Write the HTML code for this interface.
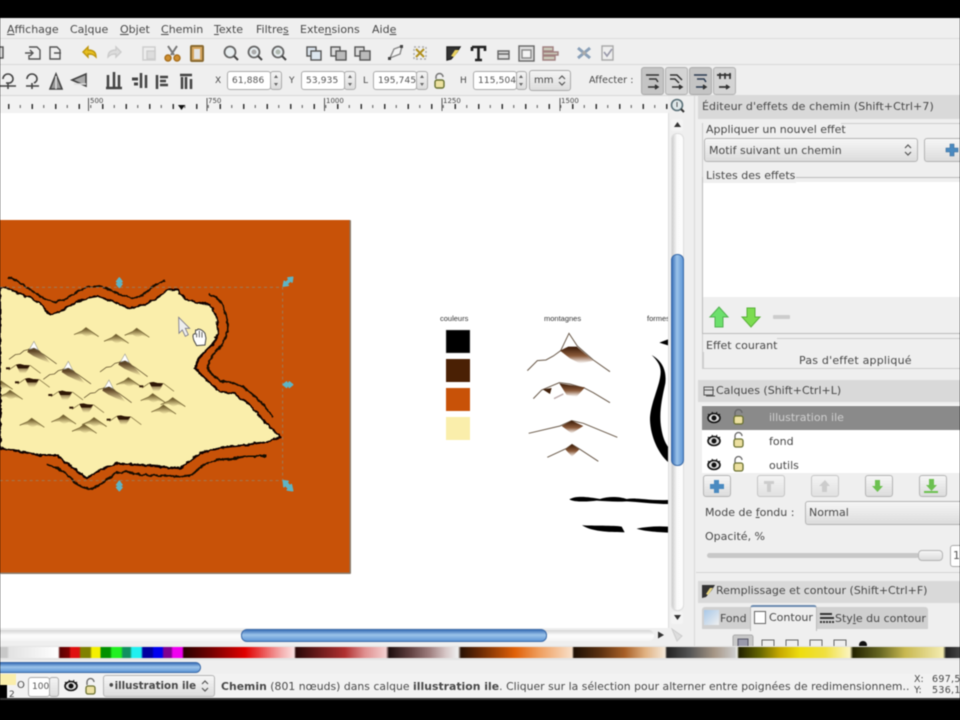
<!DOCTYPE html>
<html lang="fr"><head><meta charset="utf-8"><title>Inkscape</title>
<style>
html,body{margin:0;padding:0;background:#000;}
#r{position:relative;width:960px;height:720px;overflow:hidden;background:#000;font-family:"DejaVu Sans","Liberation Sans",sans-serif;font-size:11px;color:#484848;filter:blur(.6px);}
#r div,#r span.t{position:absolute;}
.t{white-space:nowrap;line-height:14px;}
.f{background:#fff;border:1px solid #aaa;border-radius:3px;box-sizing:border-box;font-size:9px;line-height:18px;padding-left:4px;color:#555;letter-spacing:.15px;overflow:hidden;white-space:nowrap;}
.sp{background:linear-gradient(#f4f4f4,#ddd);border:1px solid #aaa;border-radius:3px;box-sizing:border-box;}
.b{background:linear-gradient(#f6f6f6,#dcdcdc);border:1px solid #b4b4b4;border-radius:3px;box-sizing:border-box;}
.h{background:#d9d9d9;left:698px;width:262px;}
u{text-decoration:underline;}
</style></head><body>
<div id="r">
<!-- window -->
<div style="left:0;top:18px;width:960px;height:680px;background:#efefef"></div>
<div style="left:0;top:38px;width:960px;height:1px;background:#ddd"></div>
<div style="left:0;top:64px;width:960px;height:1px;background:#d8d8d8"></div>
<div style="left:0;top:95px;width:960px;height:1px;background:#d8d8d8"></div>

<!-- menu -->
<span class="t" style="left:7px;top:23px"><u>A</u>ffichage</span>
<span class="t" style="left:70px;top:23px">Ca<u>l</u>que</span>
<span class="t" style="left:120px;top:23px"><u>O</u>bjet</span>
<span class="t" style="left:161px;top:23px"><u>C</u>hemin</span>
<span class="t" style="left:214px;top:23px"><u>T</u>exte</span>
<span class="t" style="left:256px;top:23px">Filtre<u>s</u></span>
<span class="t" style="left:300px;top:23px">Exte<u>n</u>sions</span>
<span class="t" style="left:372px;top:23px">Aid<u>e</u></span>

<!-- toolbar 1 icons -->
<svg style="position:absolute;left:0;top:38px" width="640" height="28" fill="none" stroke="#555" stroke-width="1.4">
<rect x="-6" y="9" width="9" height="11" fill="#ddd"/>
<path d="M29 9h8l3 3v9h-11v-4M25 15h8M30 12l3 3-3 3"/><path d="M50 9h7l3 3v9h-10zM54 15h7" />
<path d="M96 19c0-5-3-7-8-7v-3l-5 5 5 5v-3c3 0 5 0 8 3z" fill="#e8c020" stroke="#c09810"/>
<path d="M108 19c0-5 3-7 8-7v-3l5 5-5 5v-3c-3 0-5 0-8 3z" fill="#ddd" stroke="#ccc"/>
<rect x="143" y="9" width="12" height="13" fill="#eee" stroke="#ccc"/><rect x="147" y="13" width="8" height="8" fill="#ddd" stroke="#ccc"/>
<path d="M168 8l6 9M177 8l-6 9" stroke="#777" stroke-width="2"/><circle cx="168" cy="20" r="3" fill="#d09030" stroke="#a87020"/><circle cx="177" cy="20" r="3" fill="#d09030" stroke="#a87020"/>
<rect x="191" y="8" width="12" height="15" rx="1" fill="#d8a860" stroke="#8a6a30" stroke-width="2"/><rect x="194" y="11" width="6" height="10" fill="#e4e4e4" stroke="none"/>
<g fill="#e8eef0" stroke="#666" stroke-width="1.8"><circle cx="230" cy="14" r="5.5"/><circle cx="254" cy="14" r="5.5"/><circle cx="278" cy="14" r="5.5"/></g>
<path d="M234 18l4 4M258 18l4 4M282 18l4 4" stroke="#444" stroke-width="2"/><circle cx="254" cy="14" r="2.5" fill="#aaa" stroke="none"/><circle cx="278" cy="14" r="2.5" fill="#b0b8b0" stroke="none"/>
<rect x="307" y="9" width="9" height="9" fill="#dde6ee"/><rect x="311" y="13" width="10" height="9" fill="#dde6ee"/>
<rect x="331" y="9" width="9" height="9" fill="#ddd"/><rect x="336" y="13" width="10" height="9" fill="#bbb"/>
<rect x="355" y="9" width="9" height="9" fill="#ddd"/><rect x="360" y="13" width="10" height="9" fill="#bbb"/>
<path d="M390 20l4-9 8-3-2 8z" stroke="#888" fill="#f4f4f4"/><rect x="388" y="19" width="3" height="3" fill="#444" stroke="none"/><rect x="400" y="7" width="3" height="3" fill="#444" stroke="none"/>
<path d="M414 9h12v12h-12z" stroke="#aaa" stroke-dasharray="2 2"/><path d="M416 11l8 8M424 11l-8 8" stroke="#b09020" stroke-width="2"/>
<path d="M447 9h13l-3 5-6 7-4 1z" fill="#333" stroke="#222"/><path d="M451 18l4-6h4l-5 7z" fill="#e8d060" stroke="none"/>
<path d="M472 9h13v4M478.500 9v13M475 22h7M472 13v-4" stroke="#222" stroke-width="2.600"/>
<path d="M498 13h11v3h-11zM498 16h11v5h-11z" fill="#ddd" stroke="#666"/>
<rect x="519" y="8" width="15" height="15" fill="#ddd" stroke="#666"/><rect x="522" y="12" width="9" height="8" fill="#f4f4f4" stroke="#888"/>
<path d="M543 9h10v4h-10zM543 14h15v3h-15zM543 18h12v4h-12z" fill="#ccb" stroke="#a08080"/>
<path d="M578 10l12 10M590 10l-12 10" stroke="#8aa0b8" stroke-width="3"/><circle cx="584" cy="15" r="2" fill="#aaa" stroke="none"/>
<path d="M602 8h11v14h-11z" stroke="#aaa" fill="#eee"/><path d="M604 14l3 4 5-7" stroke="#99a" stroke-width="1.6"/>
</svg>

<!-- toolbar 2 icons -->
<svg style="position:absolute;left:0;top:66px" width="200" height="30" fill="none" stroke="#444" stroke-width="1.6">
<path d="M3 13a5 5 0 0 1 10 0c0 2-1 3-3 4h-4M0 20h16M8 17v6"/><path d="M27 13a5 5 0 0 1 10 0c0 2-1 3-3 4M26 20h13M32 17v6"/>
<path d="M56 8l6 15h-12z" fill="#999" stroke="#444"/><path d="M56 10v13" stroke="#ddd"/>
<path d="M72 14l14-6v12z" fill="#aaa"/><path d="M74 18h12" stroke="#ddd"/>
<path d="M108 9v12M114 6v15M119 9v12M106 22h16" stroke-width="2.5"/><path d="M132 13h6M134 18h4" stroke-width="3"/><path d="M141 7v15M146 9v13" stroke-width="2.500"/>
<path d="M157 9v14M160 11h8M160 15h6M160 19h8" stroke-width="2.500"/><path d="M180 9h12M182 11v12M186 11v12M191 13v10" stroke-width="2.500"/>
</svg>

<span class="t" style="left:215px;top:74px;font-size:9px">X</span>
<div class="f" style="left:227px;top:71px;width:44px;height:19px">61,886</div><div class="sp" style="left:270px;top:71px;width:12px;height:19px"></div>
<span class="t" style="left:289px;top:74px;font-size:9px">Y</span>
<div class="f" style="left:301px;top:71px;width:44px;height:19px">53,935</div><div class="sp" style="left:344px;top:71px;width:12px;height:19px"></div>
<span class="t" style="left:363px;top:74px;font-size:9px">L</span>
<div class="f" style="left:373px;top:71px;width:44px;height:19px">195,745</div><div class="sp" style="left:416px;top:71px;width:12px;height:19px"></div>
<svg style="position:absolute;left:433px;top:72px" width="14" height="18" fill="none"><path d="M3 7V5a3.500 3.500 0 0 1 7 0" stroke="#777" stroke-width="1.500"/><rect x="2" y="8" width="9" height="8" rx="2" fill="#ede2a0" stroke="#667030" stroke-width="1.400"/></svg>
<span class="t" style="left:460px;top:74px;font-size:9px">H</span>
<div class="f" style="left:473px;top:71px;width:44px;height:19px">115,504</div><div class="sp" style="left:516px;top:71px;width:11px;height:19px"></div>
<svg style="position:absolute;left:270px;top:71px" width="260" height="19" fill="#666"><g id="sa"><path d="M4 7l2-3 2 3zM4 12l2 3 2-3z"/></g><path d="M78 7l2-3 2 3zM78 12l2 3 2-3zM150 7l2-3 2 3zM150 12l2 3 2-3zM249 7l2-3 2 3zM249 12l2 3 2-3z"/></svg>
<div class="sp" style="left:529px;top:70px;width:42px;height:21px"></div>
<span class="t" style="left:534px;top:74px;font-size:10px">mm</span>
<svg style="position:absolute;left:557px;top:74px" width="10" height="13" fill="none" stroke="#555" stroke-width="1.200"><path d="M2 5l3-3 3 3M2 8l3 3 3-3"/></svg>
<span class="t" style="left:589px;top:74px;font-size:9.500px;letter-spacing:.1px">Affecter :</span>
<div style="left:641px;top:67px;width:23px;height:28px;background:#c4c4c4;border:1px solid #aaa;border-radius:3px;box-sizing:border-box"></div>
<div style="left:665px;top:67px;width:23px;height:28px;background:#d4d4d4;border:1px solid #b0b0b0;border-radius:3px;box-sizing:border-box"></div>
<div style="left:689px;top:67px;width:23px;height:28px;background:#c4c4c4;border:1px solid #aaa;border-radius:3px;box-sizing:border-box"></div>
<div style="left:713px;top:67px;width:23px;height:28px;background:#d4d4d4;border:1px solid #b0b0b0;border-radius:3px;box-sizing:border-box"></div>
<svg style="position:absolute;left:641px;top:67px" width="96" height="28" fill="none" stroke="#333" stroke-width="1.500">
<path d="M5 8h13M8 12h7l2 3M7 20h9"/><path d="M14 18l3 2-3 2" fill="#333"/>
<path d="M29 8h7l5 5M29 12h5l4 4M31 20h9"/><path d="M38 18l3 2-3 2" fill="#333"/>
<path d="M53 8h13M56 12h7l2 3M55 20h9" stroke="#2a3a50"/><path d="M62 18l3 2-3 2" fill="#333"/>
<path d="M76 8h14M79 6v6M84 6v6M89 6v6M78 20h9" stroke-width="1.700"/><path d="M85 18l3 2-3 2" fill="#333"/>
</svg>

<!-- ruler -->
<svg style="position:absolute;left:0;top:96px;background:#f2f2f2" width="668" height="17">
<defs><pattern id="tk" x="8" width="11.750" height="17" patternUnits="userSpaceOnUse"><rect x="0" y="9" width="1" height="3" fill="#555"/></pattern><pattern id="tk2" x="8" width="23.500" height="17" patternUnits="userSpaceOnUse"><rect x="0" y="8" width="1.500" height="5" fill="#333"/></pattern></defs>
<rect width="668" height="17" fill="url(#tk)"/><rect width="668" height="17" fill="url(#tk2)"/>
<g stroke="#555"><path d="M88.500 2v13M207 2v13M324.500 2v13M442 2v13M560 2v13"/></g>
<g font-size="7" fill="#444" font-family="DejaVu Sans"><text x="90" y="7">500</text><text x="208" y="7">750</text><text x="326" y="7">1000</text><text x="443" y="7">1250</text><text x="561" y="7">1500</text></g>
<path d="M178 9h7l-3.500 5z" fill="#111"/>
</svg>
<svg style="position:absolute;left:669px;top:98px" width="18" height="18" fill="none"><circle cx="8" cy="7" r="5.500" fill="#dfe8ea" stroke="#5a7078" stroke-width="1.600"/><path d="M12 11l3 3" stroke="#333" stroke-width="2"/><path d="M8 4v5" stroke="#555"/></svg>

<!-- canvas -->
<div style="left:0;top:113px;width:668px;height:515px;background:#fff"></div>
<svg style="position:absolute;left:0;top:113px" width="668" height="515" viewBox="0 113 668 515">
<defs>
<filter id="rough" filterUnits="userSpaceOnUse" x="-60" y="100" width="1100" height="850"><feTurbulence type="fractalNoise" baseFrequency=".07" numOctaves="2" seed="4" result="n"/><feDisplacementMap in="SourceGraphic" in2="n" scale="10" xChannelSelector="R" yChannelSelector="G"/></filter>
<linearGradient id="mg" x1="0" y1="0" x2="0" y2="1"><stop offset="0" stop-color="#3a1c06"/><stop offset="1" stop-color="#3a1c06" stop-opacity="0"/></linearGradient>
<linearGradient id="mo" x1="0" y1="0" x2="0" y2="1"><stop offset="0" stop-color="#5a4418"/><stop offset="1" stop-color="#5a4418" stop-opacity="0"/></linearGradient>
<g id="a"><path d="M-36,12 L-12,1 L0,-9 L14,1 L38,18 L16,12 L2,18 L-12,10Z" fill="url(#mo)"/><path d="M-36,12 L-12,1 L0,-9 L14,1 L38,18" fill="none" stroke="#7a6a38" stroke-width="2.600"/></g>
<g id="b"><path d="M-16,-8 L0,-10 L16,-2 L36,18 L50,36 L20,24 L-2,14 L-20,2Z" fill="url(#mg)"/><path d="M-75,24 L-56,10 L-42,8 L-30,-2 L-14,-6 L6,-4 L30,10 L68,38" fill="none" stroke="#6a5a34" stroke-width="2.400"/><path d="M-14,-6 L0,-30 L13,-4 L0,-10Z" fill="#fff" stroke="#9a9a90" stroke-width="1.800"/></g>
<g id="c"><path d="M-20,-10 L-8,-12 L4,-9 L22,-8 L16,4 L8,16 L-8,16 L-14,2Z" fill="url(#mg)"/><path d="M-20,-10 L-8,-12 L4,-9 L22,-8 L14,1 L-14,1Z" fill="#2e1604"/><path d="M-20,-9 L-42,6 M22,-8 L54,16" fill="none" stroke="#8a7a48" stroke-width="2.400"/><path d="M-50,-2 h12 v6 h-12z" fill="#2e1604"/></g>
<linearGradient id="pk" x1="0" y1="0" x2="0" y2="1"><stop offset="0" stop-color="#3a1a06"/><stop offset=".55" stop-color="#8a5a3a"/><stop offset="1" stop-color="#8a5a3a" stop-opacity="0"/></linearGradient>
</defs>
<!-- page -->
<rect x="0" y="220" width="351" height="354" fill="#8a7a6a" rx="1"/>
<rect x="0" y="220" width="349.500" height="352.500" fill="#c85208"/>
<g transform="translate(0,210) scale(.3333)">
<g filter="url(#rough)">
<g fill="none" stroke="#140800" stroke-linejoin="round">
<path d="M25,202 L60,218 L85,235 L110,252 L135,265 L160,277 L195,268 L225,248 L260,232 L300,228 L330,240 L360,255 L400,266 L430,255 L460,228 L495,212" stroke-width="5.500"/>
<path d="M625,252 L650,262 L668,285 L678,315 L684,345 L680,375 L665,405 L640,435 L622,465 L632,490 L660,512 L695,518 L730,530 L765,560 L795,590 L820,622" stroke-width="6"/>
<path d="M800,738 L745,738 L700,745 L650,750 L610,765 L575,795 L540,800 L490,797 L430,795 L380,785 L345,790 L305,822 L265,838 L235,825 L205,797 L175,775 L140,762" stroke-width="6"/>
</g>
<path d="M0,238 L20,232 L50,248 L90,262 L125,285 L150,315 L190,300 L230,275 L290,258 L340,275 L390,295 L430,285 L470,265 L500,240 L530,238 L560,270 L630,285 L650,320 L655,370 L640,400 L600,440 L585,475 L620,510 L660,545 L700,550 L745,580 L780,620 L842,682 L800,695 L740,705 L670,712 L600,730 L540,775 L480,770 L420,765 L350,760 L310,775 L260,805 L220,775 L170,735 L120,735 L60,725 L0,715 Z" fill="#faeeab" stroke="#0c0500" stroke-width="6" stroke-linejoin="round"/>
</g>
<!-- selection box -->
<path d="M0,232 H848 V812 H0" fill="none" stroke="#8a9080" stroke-width="2.500" stroke-dasharray="9 9" opacity=".8"/>
<!-- mountains -->
<use href="#a" x="258" y="362"/><use href="#a" x="348" y="382"/><use href="#a" x="410" y="364"/><use href="#a" x="385" y="512"/><use href="#a" x="458" y="560"/><use href="#a" x="518" y="572"/><use href="#a" x="490" y="594"/><use href="#a" x="95" y="634"/><use href="#a" x="190" y="624"/><use href="#a" x="282" y="632"/><use href="#a" x="252" y="652"/><use href="#a" x="30" y="550"/><use href="#a" x="0" y="520"/>
<use href="#b" x="102" y="424"/><use href="#b" x="205" y="484"/><use href="#b" x="375" y="462"/><use href="#b" x="327" y="540"/>
<use href="#c" x="68" y="474"/><use href="#c" x="95" y="516"/><use href="#c" x="195" y="554"/><use href="#c" x="258" y="592"/><use href="#c" x="370" y="628"/><use href="#c" x="468" y="528"/>
<!-- handles -->
<g fill="#5fb4c4" stroke="#5fb4c4" stroke-width="5" stroke-linejoin="round">
<path d="M358,204 L366,215 L362,215 L362,222 L366,222 L358,232 L350,222 L354,222 L354,215 L350,215Z"/>
<path d="M358,814 L366,825 L362,825 L362,832 L366,832 L358,842 L350,832 L354,832 L354,825 L350,825Z"/>
<path d="M850,524 L860,516 L860,520 L868,520 L868,516 L878,524 L868,532 L868,528 L860,528 L860,532Z"/>
<path d="M850,228 L853,214 L857,218 L868,208 L864,204 L878,202 L876,216 L872,212 L861,222 L865,226Z"/>
<path d="M850,812 L864,814 L861,818 L870,828 L874,824 L878,842 L862,840 L866,836 L856,826 L852,830Z"/>
</g>
<!-- cursor -->
<path d="M536,322 L569,355 L556,355 L565,374 L556,379 L547,360 L537,370Z" fill="#eee" stroke="#778" stroke-width="2.500"/>
<path d="M582,392 C576,375 580,370 586,372 L587,360 L592,360 L594,357 L600,358 L604,360 L610,364 L615,370 L618,385 L615,405 L590,407Z" fill="#fff" stroke="#444" stroke-width="3"/>
<path d="M590,370v12M598,362v20M606,366v17" stroke="#444" stroke-width="2.500"/>
</g>
<!-- colour swatches -->
<rect x="446" y="330" width="24" height="23" fill="#000" stroke="#aaa" stroke-width=".4"/>
<rect x="446" y="359" width="24" height="23" fill="#4a2004"/>
<rect x="446" y="388" width="24" height="23" fill="#c85208"/>
<rect x="446" y="417" width="24" height="23" fill="#faeeab"/>
<g font-family="Liberation Sans" font-size="7.500" fill="#333"><text x="440" y="321">couleurs</text><text x="544" y="321">montagnes</text><text x="647" y="321">formes</text></g>
<g transform="translate(420,300) scale(.3333)">
<path d="M322,212 L352,182 L378,180 L400,168 L422,152 L447,100 L472,138 L520,180 L570,215" fill="none" stroke="#6a5a4a" stroke-width="3"/>
<path d="M420,152 L445,140 L470,140 L500,165 L520,182 L480,190 L450,175Z" fill="url(#pk)"/>
<path d="M340,296 L365,270 L418,248 L450,252 L495,265 L520,278 L570,308" fill="none" stroke="#6a5a4a" stroke-width="3"/>
<path d="M418,250 L495,262 L470,290 L440,285Z" fill="url(#pk)"/><path d="M368,268 L395,264 L390,282Z" fill="#40200a"/>
<path d="M402,296 L430,282" stroke="#baa" stroke-width="4"/>
<path d="M326,400 L420,378 L455,362 L490,370 L592,412" fill="none" stroke="#6a5a4a" stroke-width="3"/><path d="M425,378 L455,362 L490,378 L455,400Z" fill="url(#pk)"/>
<path d="M382,472 L440,445 L456,433 L480,448 L535,484" fill="none" stroke="#6a5a4a" stroke-width="3"/><path d="M436,448 L456,433 L478,448 L456,470Z" fill="url(#pk)"/>
<g fill="#000"><path d="M718,128 L744,118 V136Z"/><path d="M695,165 C730,185 740,215 736,250 C726,295 716,340 724,385 C730,420 738,430 744,440 V486 C715,460 692,410 690,360 C690,310 722,255 722,215 C722,195 710,180 695,165Z"/>
<path d="M448,598 C470,585 510,592 540,597 C565,588 600,590 620,597 C650,592 680,602 744,600 V612 C700,612 660,606 620,604 C590,606 560,604 530,602 C500,606 460,606 448,598Z"/>
<path d="M486,676 C520,678 580,676 605,680 L614,697 C580,696 520,698 486,676Z"/><path d="M650,686 C680,680 710,678 744,680 V698 C710,696 670,694 650,686Z"/></g>
</g>
</svg>
<div style="left:668px;top:113px;width:2px;height:515px;background:#ddd"></div>

<!-- vertical scrollbar -->
<div style="left:669px;top:113px;width:18px;height:532px;background:#efefef"></div>
<div style="left:671px;top:119px;width:12px;height:12px;background:#f4f4f4;border-radius:2px"></div>
<svg style="position:absolute;left:673px;top:121px" width="9" height="8"><path d="M4.500 1L8 6H1z" fill="#333"/></svg>
<div style="left:671px;top:133px;width:13px;height:478px;background:linear-gradient(90deg,#ccc,#fafafa 45%,#fdfdfd);border-radius:6px;box-sizing:border-box;border:1px solid #ddd"></div>
<div style="left:671px;top:254px;width:13px;height:212px;border-radius:6px;background:linear-gradient(90deg,#3a70b8,#9cc4ea 45%,#5f96d6);border:1px solid #3a6aa8;box-sizing:border-box"></div>
<div style="left:671px;top:612px;width:12px;height:12px;background:#f4f4f4;border-radius:2px"></div>
<svg style="position:absolute;left:673px;top:614px" width="9" height="8"><path d="M1 1h7L4.500 6z" fill="#333"/></svg>
<svg style="position:absolute;left:670px;top:627px" width="16" height="16"><path d="M2 2l10 7-5 5z" fill="#ddd" stroke="#ccc"/></svg>

<!-- horizontal scrollbar -->
<div style="left:0;top:628px;width:668px;height:18px;background:#efefef"></div>
<div style="left:0;top:630px;width:654px;height:11px;background:linear-gradient(#d4d4d4,#fdfdfd 50%,#f4f4f4);border-radius:0 6px 6px 0"></div>
<div style="left:241px;top:629px;width:306px;height:13px;border-radius:6px;background:linear-gradient(#3a70b8,#9cc4ea 45%,#5f96d6);border:1px solid #3a6aa8;box-sizing:border-box"></div>
<svg style="position:absolute;left:656px;top:630px" width="10" height="10"><path d="M2 1.500L8 5 2 8.500z" fill="#333"/></svg>

<!-- right panel -->
<div style="left:694px;top:96px;width:1px;height:550px;background:#d8d8d8"></div>
<div class="h" style="top:96px;height:23px"></div>
<span class="t" style="left:702px;top:100px;font-size:11px;letter-spacing:.1px">Éditeur d'effets de chemin (Shift+Ctrl+7)</span>
<div style="left:702px;top:123px;width:258px;height:246px;border:1px solid #ccc;border-right:0;box-sizing:border-box"></div>
<div style="left:703px;top:122px;width:138px;height:14px;background:#efefef"></div>
<span class="t" style="left:706px;top:123px">Appliquer un nouvel effet</span>
<div class="b" style="left:704px;top:138px;width:214px;height:24px"></div>
<span class="t" style="left:709px;top:144px">Motif suivant un chemin</span>
<svg style="position:absolute;left:903px;top:143px" width="10" height="14" fill="none" stroke="#555" stroke-width="1.200"><path d="M2 5l3-3 3 3M2 9l3 3 3-3"/></svg>
<div class="b" style="left:924px;top:138px;width:40px;height:24px"></div>
<svg style="position:absolute;left:945px;top:143px" width="14" height="14"><path d="M5 1h4v4h4v4H9v4H5V9H1V5h4z" fill="#4a8ac0" stroke="#3a6a98" stroke-width=".6"/></svg>

<div style="left:702px;top:177px;width:258px;height:157px;background:#efefef;border:1px solid #bbb;border-right:0;box-sizing:border-box"></div>
<div style="left:703px;top:182px;width:257px;height:115px;background:#fff"></div>
<div style="left:703px;top:169px;width:93px;height:14px;background:#efefef"></div>
<span class="t" style="left:706px;top:169px">Listes des effets</span>
<svg style="position:absolute;left:708px;top:305px" width="90" height="24"><path d="M11 2l9 10h-5v10H7V12H2z" fill="#6ce06c" stroke="#52b050"/><path d="M39 3h8v9h5l-9 10-9-10h5z" fill="#7cdc50" stroke="#58b038"/><rect x="65" y="10" width="17" height="4" rx="1" fill="#ccc"/></svg>
<div style="left:703px;top:338px;width:257px;height:31px;border:1px solid #ccc;border-right:0;box-sizing:border-box"></div>
<div style="left:703px;top:338px;width:74px;height:14px;background:#efefef"></div>
<span class="t" style="left:706px;top:339px">Effet courant</span>
<span class="t" style="left:799px;top:354px;letter-spacing:.2px">Pas d'effet appliqué</span>

<div class="h" style="top:380px;height:22px"></div>
<svg style="position:absolute;left:702px;top:384px" width="14" height="14" fill="none" stroke="#555"><path d="M2 3h9v8H2zM2 6h10M4 12h9" /></svg>
<span class="t" style="left:716px;top:384px">Calques (Shift+Ctrl+L)</span>
<div style="left:702px;top:405px;width:258px;height:68px;background:#fff"></div>
<div style="left:702px;top:406px;width:258px;height:24px;background:#8a8a8a"></div>
<span class="t" style="left:769px;top:411px;color:#cfcfcf">illustration ile</span>
<span class="t" style="left:769px;top:435px;font-size:11px">fond</span>
<span class="t" style="left:769px;top:459px">outils</span>
<svg style="position:absolute;left:702px;top:406px" width="50" height="68" fill="none">
<defs><g id="ey"><ellipse cx="12" cy="12" rx="6" ry="4.500" fill="#ddd" stroke="#111" stroke-width="1.600"/><circle cx="12" cy="12" r="2.500" fill="#111"/><path d="M6 8l2 2M10 6l1 2M15 6l-1 2M18 8l-2 2" stroke="#111"/></g>
<g id="lk"><path d="M33 10V7a3.500 3.500 0 0 1 7 0" stroke="#666" stroke-width="1.300"/><rect x="32" y="10" width="9" height="8" rx="2" fill="#ece0a0" stroke="#6a7030" stroke-width="1.300"/></g></defs>
<use href="#ey"/><use href="#lk"/><use href="#ey" y="23"/><use href="#lk" y="23"/><use href="#ey" y="47"/><use href="#lk" y="47"/></svg>

<div class="b" style="left:703px;top:475px;width:28px;height:22px"></div>
<div class="b" style="left:757px;top:475px;width:28px;height:22px;opacity:.7"></div>
<div class="b" style="left:811px;top:475px;width:28px;height:22px;opacity:.7"></div>
<div class="b" style="left:865px;top:475px;width:28px;height:22px"></div>
<div class="b" style="left:919px;top:475px;width:28px;height:22px"></div>
<svg style="position:absolute;left:703px;top:475px" width="250" height="22"><path d="M11 5h5v4h5v5h-5v4h-5v-4H7V9h4z" fill="#4a8ac0"/>
<path d="M61 6h10v3h-3v8h-4V9h-3z" fill="#ccc"/><path d="M122 5l5 6h-3v6h-5v-6h-3z" fill="#ccc"/><path d="M172 5h5v6h3l-5.500 6-5.500-6h3z" fill="#6cc050"/><path d="M226 4h5v6h3l-5.500 6-5.500-6h3zM221 16h14v2h-14z" fill="#6cc050"/></svg>

<span class="t" style="left:705px;top:506px">Mode de <u>f</u>ondu :</span>
<div class="b" style="left:805px;top:501px;width:165px;height:24px"></div>
<span class="t" style="left:809px;top:506px">Normal</span>
<span class="t" style="left:705px;top:530px">Opacité, %</span>
<div style="left:707px;top:553px;width:212px;height:5px;background:#c8c8c8;border-radius:3px"></div>
<div class="b" style="left:918px;top:550px;width:25px;height:11px;border-radius:4px"></div>
<div class="f" style="left:950px;top:545px;width:20px;height:22px;line-height:20px;font-size:11px;padding-left:2px">1</div>
<div style="left:696px;top:572px;width:264px;height:1px;background:#d4d4d4"></div>

<div class="h" style="top:581px;height:22px"></div>
<svg style="position:absolute;left:701px;top:584px" width="15" height="15"><path d="M1 1h13l-3 5-6 7-4 1z" fill="#333"/><path d="M5 10l4-6h3l-5 7z" fill="#ead880"/></svg>
<span class="t" style="left:716px;top:584px">Remplissage et contour (Shift+Ctrl+F)</span>
<div style="left:702px;top:607px;width:226px;height:22px;background:#d0d0d0;border-radius:3px 3px 0 0"></div>
<div style="left:704px;top:610px;width:15px;height:15px;background:linear-gradient(135deg,#a8c8e8,#f0f0f0)"></div>
<span class="t" style="left:720px;top:612px">Fond</span>
<div style="left:750px;top:605px;width:67px;height:26px;background:#efefef;border:1px solid #bbb;border-top:2px solid #6a8ab0;border-bottom:0;border-radius:3px 3px 0 0;box-sizing:border-box"></div>
<div style="left:754px;top:611px;width:12px;height:13px;background:#fff;border:1px solid #666;box-sizing:border-box"></div>
<span class="t" style="left:769px;top:611px">Contour</span>
<svg style="position:absolute;left:819px;top:610px" width="16" height="16" stroke="#333"><path d="M1 4h12M1 8h14" stroke-width="2"/><path d="M1 12h14" stroke-dasharray="2 1" stroke-width="2"/></svg>
<span class="t" style="left:835px;top:612px">Sty<u>l</u>e du contour</span>
<svg style="position:absolute;left:700px;top:634px" width="180" height="13"><rect x="33" y="1" width="20" height="16" rx="2" fill="#c8c8c8" stroke="#aaa"/><rect x="38" y="5" width="10" height="8" fill="#99a" stroke="#556"/><g fill="none" stroke="#666"><rect x="62" y="6" width="12" height="8"/><rect x="86" y="6" width="12" height="8"/><rect x="110" y="6" width="12" height="8"/><rect x="134" y="6" width="12" height="8"/></g><circle cx="163" cy="11" r="4" fill="#111"/></svg>

<!-- palette -->
<div style="left:0;top:646px;width:960px;height:14px;background:#e4e4e4"></div>
<div style="left:0;top:647px;width:960px;height:11px;background:linear-gradient(90deg,#c8c8c8 0,#c8c8c8 7px,#e2e2e2 9px,#eee 30px,#fafafa 50px,#fff 58px,#5a0000 60px,#800000 69px,#e01010 71px,#e01010 79px,#808000 81px,#808000 90px,#f4f000 92px,#f4f000 100px,#009000 101px,#009000 110px,#20f020 112px,#20f020 121px,#109060 123px,#109060 130px,#20f0f0 132px,#20f0f0 141px,#0000a0 143px,#0000a0 152px,#0000f0 154px,#0000f0 162px,#800090 164px,#800090 171px,#f000f0 173px,#f000f0 182px,#2a0000 184px,#700000 210px,#e00000 245px,#e83a3a 258px,#f08080 272px,#f4b0b0 282px,#fbe0e0 294px,#2a0808 296px,#601818 315px,#b03030 345px,#e09090 365px,#f4d0d0 386px,#1e0e0e 389px,#604040 410px,#a08080 430px,#d8c8c8 446px,#f0f0f0 458px,#2a1204 461px,#6a2a04 480px,#e06008 515px,#f0a060 540px,#f8e0c8 572px,#1e1004 574px,#5a3010 600px,#a86028 625px,#e0b080 645px,#f4e8d8 665px,#222 667px,#555 690px,#a89888 715px,#ccc 735px,#f0f0e8 737px,#222200 739px,#666600 760px,#c8aa00 780px,#eedd10 800px,#f0e040 825px,#fbf4c0 850px,#222200 853px,#666622 880px,#c8b850 905px,#f4ecb0 943px,#222 946px,#444 960px)"></div>

<!-- lower scrollbar -->
<div style="left:0;top:660px;width:960px;height:14px;background:#efefef"></div>
<div style="left:0;top:662px;width:201px;height:11px;border-radius:0 6px 6px 0;background:linear-gradient(#3a70b8,#9cc4ea 45%,#5f96d6);border:1px solid #3a6aa8;border-left:0;box-sizing:border-box"></div>

<!-- status bar -->
<div style="left:0;top:674px;width:960px;height:24px;background:#f2f2f2"></div>
<div style="left:0;top:698px;width:960px;height:2px;background:#333"></div>
<div style="left:0;top:674px;width:16px;height:11px;background:#faeeab"></div>
<div style="left:0;top:685px;width:7px;height:13px;background:#000"></div>
<span class="t" style="left:9px;top:688px;font-size:9px">2</span>
<span class="t" style="left:17px;top:679px;font-size:10px">O</span>
<div class="f" style="left:28px;top:677px;width:22px;height:20px;line-height:18px;padding-left:3px;letter-spacing:0">100</div>
<div class="sp" style="left:49px;top:677px;width:10px;height:20px"></div>
<svg style="position:absolute;left:59px;top:676px" width="50" height="22" fill="none"><g transform="translate(0,-2)"><ellipse cx="12" cy="12" rx="6" ry="4.500" fill="#ddd" stroke="#111" stroke-width="1.600"/><circle cx="12" cy="12" r="2.500" fill="#111"/><path d="M6 8l2 2M10 6l1 2M15 6l-1 2M18 8l-2 2" stroke="#111"/></g><path d="M28 9V6a3.500 3.500 0 0 1 7 0" stroke="#666" stroke-width="1.300"/><rect x="27" y="10" width="9" height="8" rx="2" fill="#ece0a0" stroke="#6a7030" stroke-width="1.300"/></svg>
<div class="b" style="left:103px;top:675px;width:112px;height:22px"></div>
<span class="t" style="left:108px;top:679px;font-weight:bold;font-size:10.300px">•illustration ile</span>
<svg style="position:absolute;left:200px;top:679px" width="10" height="14" fill="none" stroke="#555" stroke-width="1.200"><path d="M2 5l3-3 3 3M2 9l3 3 3-3"/></svg>
<span class="t" style="left:221px;top:680px;font-size:10.800px;letter-spacing:.04px"><b>Chemin</b> (801 nœuds) dans calque <b>illustration ile</b>. Cliquer sur la sélection pour alterner entre poignées de redimensionnem..</span>
<span class="t" style="left:914px;top:673px;font-size:9.500px">X:</span>
<span class="t" style="left:914px;top:684px;font-size:9.500px">Y:</span>
<span class="t" style="left:932px;top:673px;font-size:9.500px;letter-spacing:.3px">697,5</span>
<span class="t" style="left:932px;top:684px;font-size:9.500px;letter-spacing:.3px">536,1</span>

<!-- top black overlay -->
<div style="left:0;top:0;width:960px;height:18px;background:#000"></div>
</div>
</body></html>
